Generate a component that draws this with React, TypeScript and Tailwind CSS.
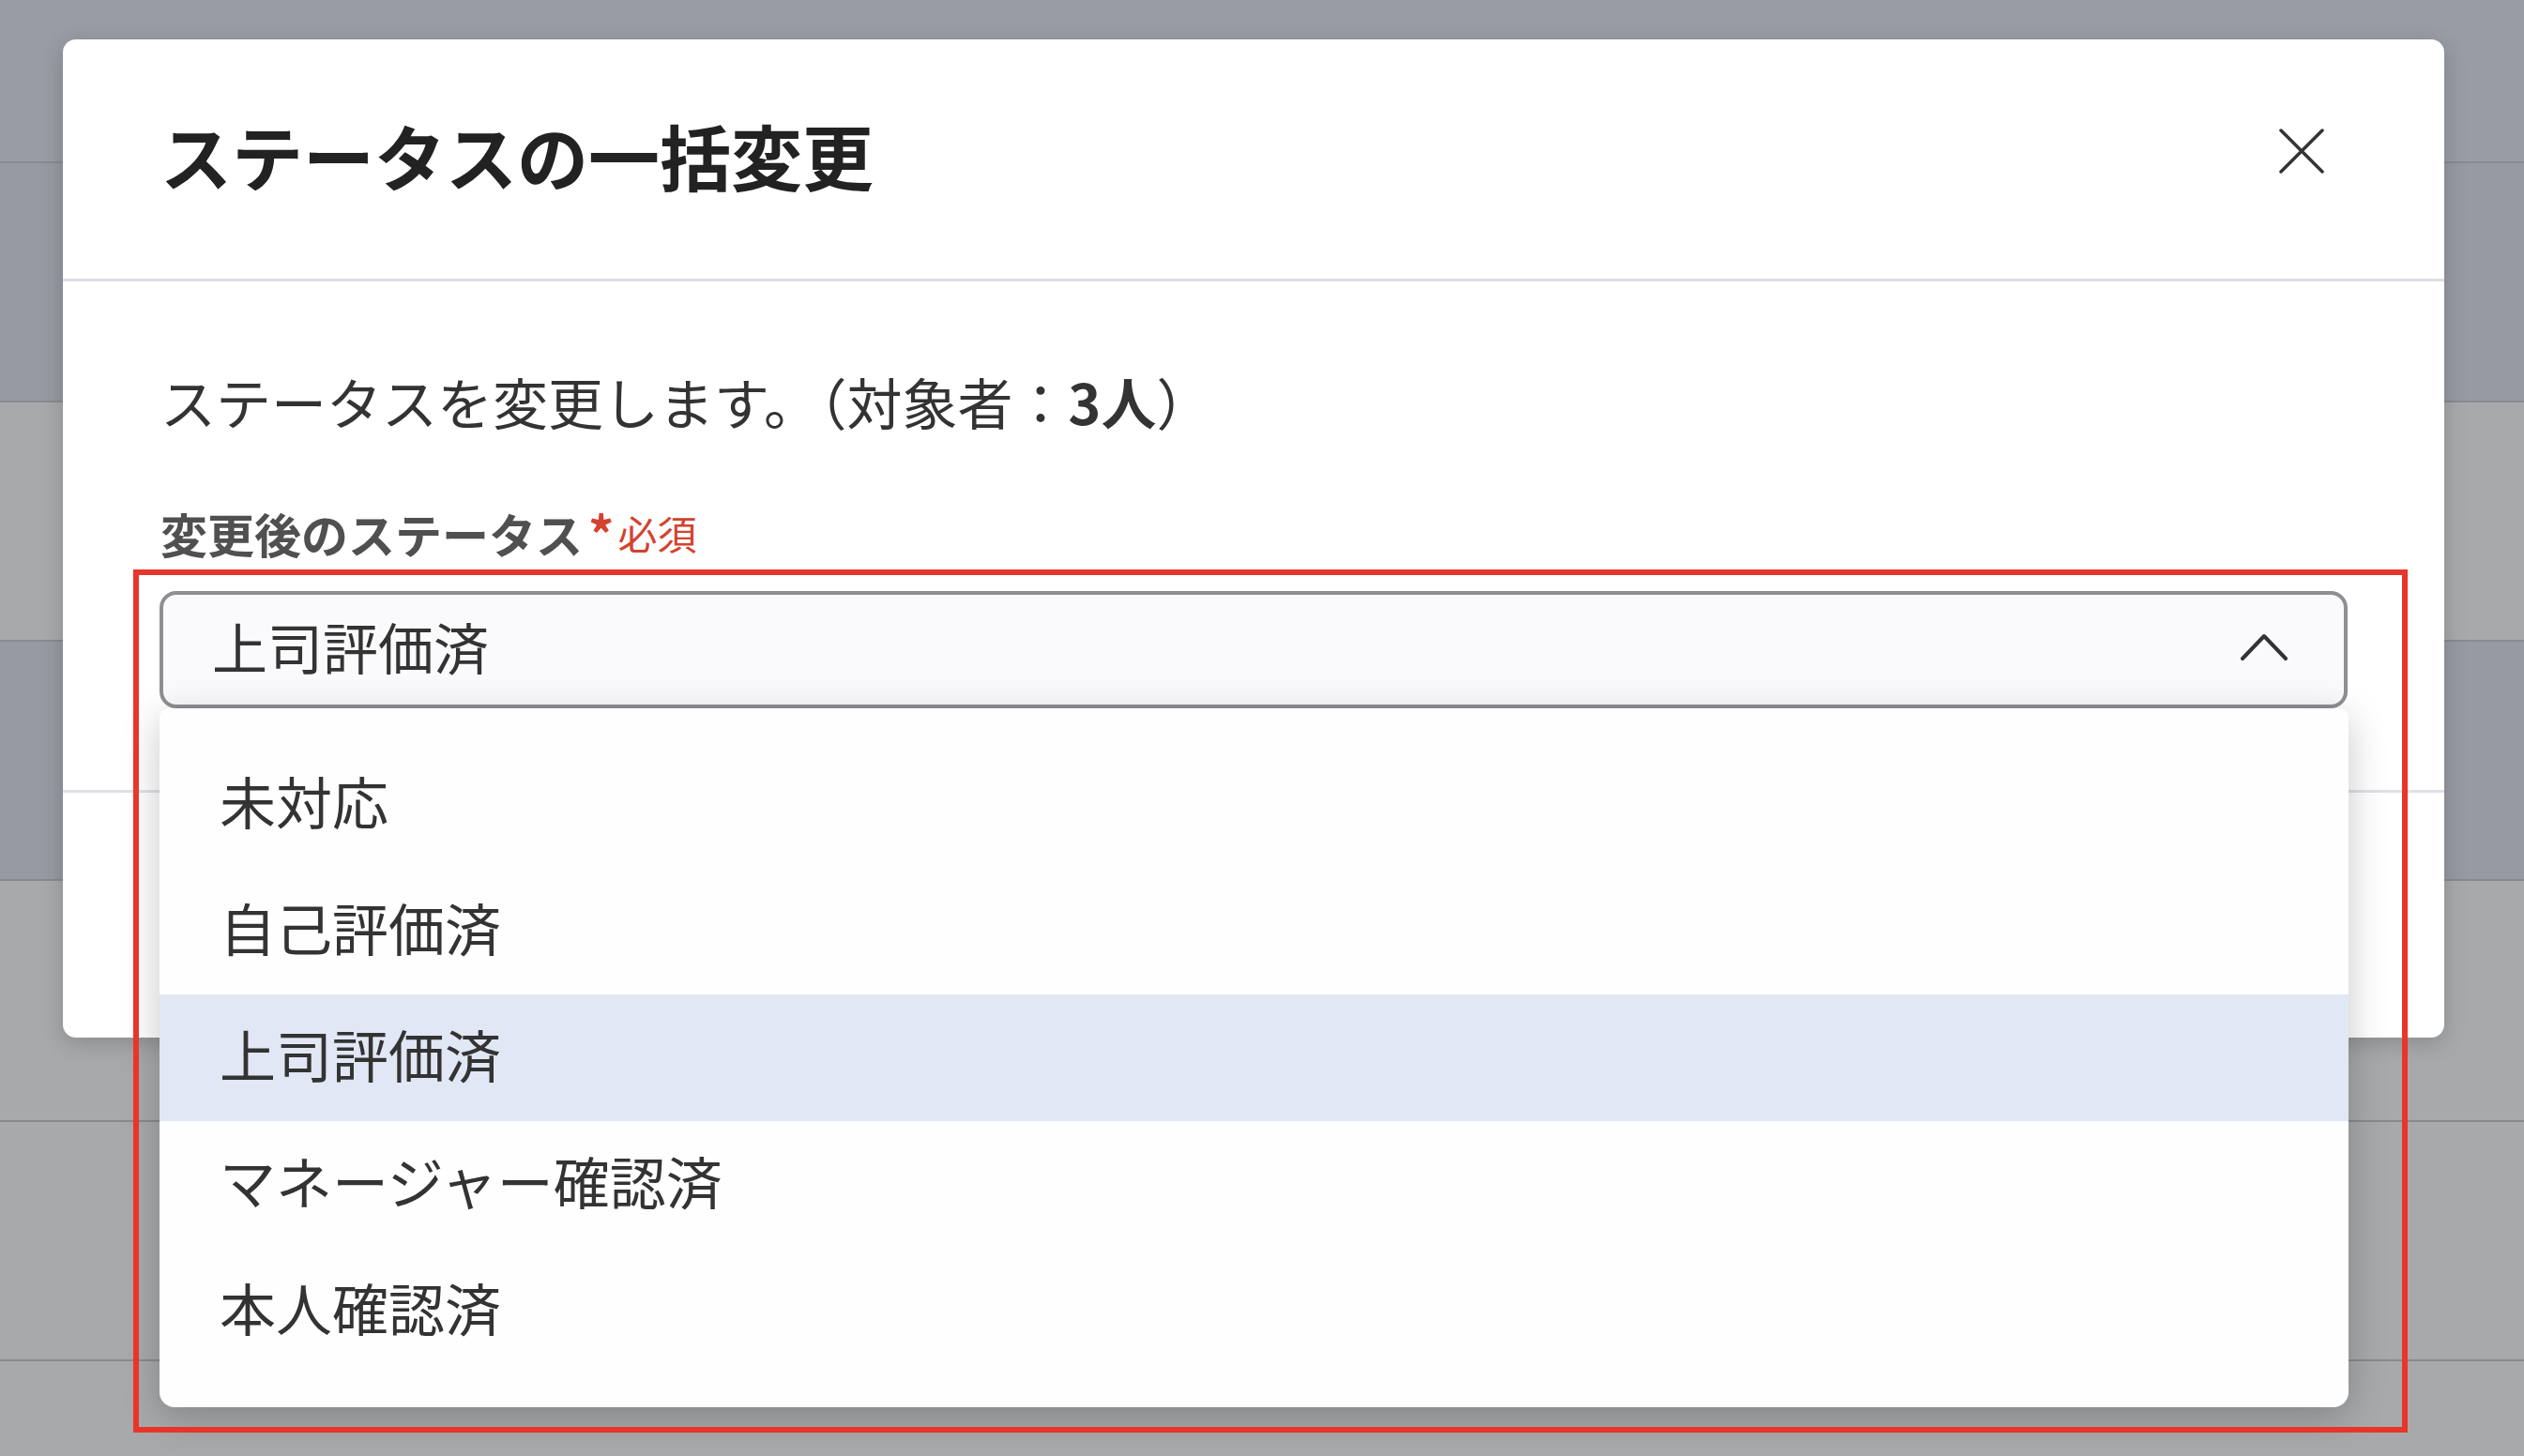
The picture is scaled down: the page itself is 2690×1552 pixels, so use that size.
import React from "react";

const FONT = { fontFamily: '"Noto Sans CJK JP", "Noto Sans", sans-serif' };

const rows = [
  { h: "h-[172px]", c: "bg-[#989ca5]", line: false },
  { h: "h-[255px]", c: "bg-[#969aa3]", line: true },
  { h: "h-[255px]", c: "bg-[#a8a9ab]", line: true },
  { h: "h-[255px]", c: "bg-[#969aa3]", line: true },
  { h: "h-[257px]", c: "bg-[#a8a9ab]", line: true },
  { h: "h-[255px]", c: "bg-[#a8a9ab]", line: true },
  { h: "h-[103px]", c: "bg-[#a8a9ab]", line: true },
];

const options = ["未対応", "自己評価済", "上司評価済", "マネージャー確認済", "本人確認済"];

const CloseIcon = () => (
  <svg width="48" height="48" viewBox="0 0 48 48" fill="none">
    <path d="M2 2 L46 46 M46 2 L2 46" stroke="#333" strokeWidth="3.5" strokeLinecap="round" />
  </svg>
);

const ChevronUp = () => (
  <svg width="50" height="30" viewBox="0 0 50 30" fill="none">
    <polyline points="2,27 25,3 48,27" stroke="#333" strokeWidth="4" strokeLinecap="round" strokeLinejoin="round" />
  </svg>
);

export default function App() {
  const selected = "上司評価済";

  return (
    <div className="relative w-[2690px] h-[1552px] overflow-hidden" style={FONT}>
      {/* dimmed table behind the modal */}
      <div className="flex flex-col">
        {rows.map((r, i) => (
          <div
            key={i}
            className={`${r.h} ${r.c} ${r.line ? "border-t-2 border-[#878a90]" : ""}`}
          />
        ))}
      </div>

      {/* modal */}
      <div className="absolute left-[67px] top-[42px] w-[2538px] h-[1064px] rounded-[14px] bg-white shadow-[0_6px_24px_rgba(0,0,0,0.18)] flex flex-col">
        <div className="h-[258px] flex items-center justify-between pl-[104px] pr-[128px] border-b-[3px] border-[#dedfe4]">
          <h1 className="text-[76px] leading-none font-bold text-[#222] mt-[-10px]">
            ステータスの一括変更
          </h1>
          <button className="mt-[-18px]">
            <CloseIcon />
          </button>
        </div>

        <div className="h-[545px] px-[103px] flex flex-col border-b-[3px] border-[#e0e1e6]">
          <p className="mt-[98px] pl-[1px] text-[59px] leading-none text-[#333]">
            ステータスを変更します。（対象者：<span className="font-bold">3人</span>）
          </p>
          <div className="mt-[86px] pl-[1px] flex items-start h-[50px]">
            <span className="text-[50px] leading-none font-bold text-[#505050]">
              変更後のステータス
            </span>
            <span className="ml-[6px] text-[54px] leading-none font-bold text-[#d2432f] mt-[-2px]">*</span>
            <span className="ml-[4px] text-[42px] leading-none text-[#d2432f] mt-[4px]">必須</span>
          </div>
          <div className="mt-[37px] h-[125px] border-[4px] border-[#8e8e93] rounded-[18px] bg-[#fafafc] flex items-center justify-between pl-[52px] pr-[60px]">
            <span className="text-[59px] leading-none text-[#333] mt-[-8px]">{selected}</span>
            <span className="mt-[-6px]">
              <ChevronUp />
            </span>
          </div>
        </div>
      </div>

      {/* open dropdown list */}
      <div className="absolute left-[170px] top-[755px] w-[2333px] h-[745px] bg-[#fefefe] rounded-t-[10px] rounded-b-[16px] shadow-[0_10px_40px_rgba(0,0,0,0.22)] pt-[35px]">
        {options.map((o) => (
          <div
            key={o}
            className={`h-[135px] flex items-center pl-[64px] pb-[9px] text-[60px] leading-none text-[#333] ${
              o === selected ? "bg-[#e1e7f4]" : ""
            }`}
          >
            {o}
          </div>
        ))}
      </div>

      {/* annotation frame */}
      <div className="absolute left-[142px] top-[607px] w-[2424px] h-[920px] border-[6px] border-[#e8352b]" />
    </div>
  );
}
